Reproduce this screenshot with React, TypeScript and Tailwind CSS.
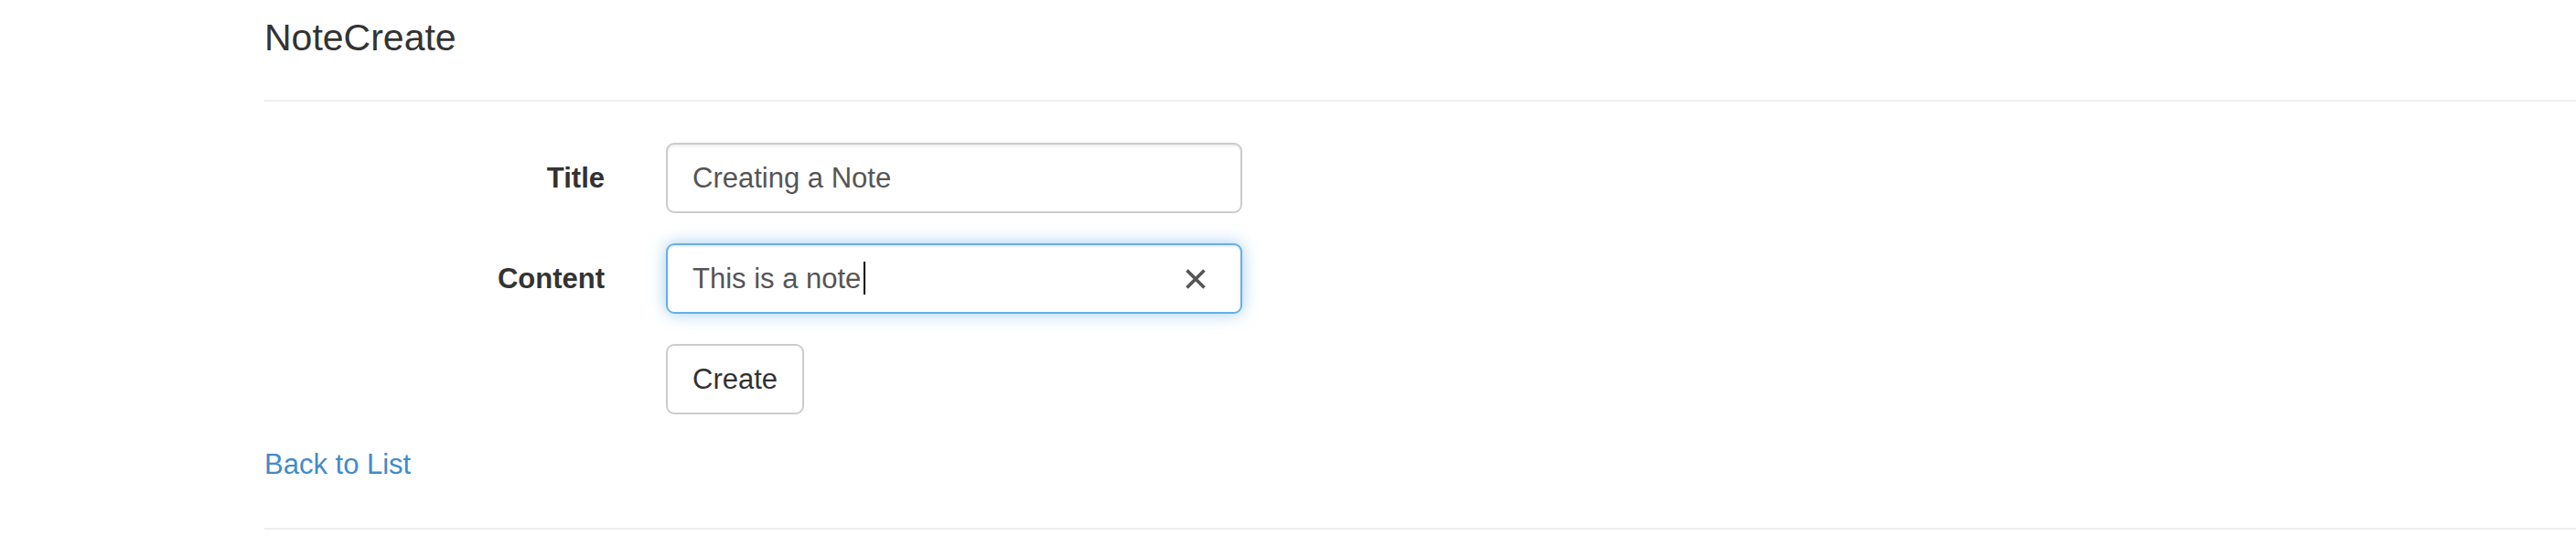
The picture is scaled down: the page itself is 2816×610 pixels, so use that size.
import { useState } from "react";

const fieldClass =
  "block h-[77px] w-full rounded-[9px] border-2 bg-white pl-[27px] text-[31px] leading-[44px] text-[#555555] outline-none";

export default function App() {
  const [title, setTitle] = useState("Creating a Note");
  const [content, setContent] = useState("This is a note");

  return (
    <main className="bg-white pt-[19px] pb-8 pl-[289px] font-['Liberation_Sans',Arial,sans-serif] text-[31px] leading-[44px] text-[#333333]">
      <h4 className="text-[41px] leading-[44px] font-normal">NoteCreate</h4>
      <hr className="mt-[46px] border-t-2 border-[#eeeeee]" />

      <form className="mt-[45px] flex flex-col gap-[33px]" onSubmit={(e) => e.preventDefault()}>
        <div className="flex items-center gap-[67px]">
          <label htmlFor="title" className="w-[372px] text-right font-bold">
            Title
          </label>
          <div className="w-[630px]">
            <input
              id="title"
              type="text"
              value={title}
              onChange={(e) => setTitle(e.target.value)}
              className={`${fieldClass} border-[#cccccc] pr-[27px] shadow-[inset_0_2px_2px_rgba(0,0,0,0.075)]`}
            />
          </div>
        </div>

        <div className="flex items-center gap-[67px]">
          <label htmlFor="content" className="w-[372px] text-right font-bold">
            Content
          </label>
          <div className="relative w-[630px]">
            <input
              id="content"
              type="text"
              value={content}
              onChange={(e) => setContent(e.target.value)}
              className={`${fieldClass} border-[#66afe9] pr-20 caret-transparent shadow-[inset_0_2px_2px_rgba(0,0,0,0.075),0_0_18px_rgba(102,175,233,0.6)]`}
            />
            <span aria-hidden="true" className="absolute top-5 left-[216px] h-9 w-[2px] bg-black" />
            <button
              type="button"
              aria-label="Clear content"
              onClick={() => setContent("")}
              className="absolute inset-y-0 right-[29px] flex w-11 items-center justify-center text-[#555555]"
            >
              <svg width="22" height="22" viewBox="0 0 22 22" fill="none" stroke="currentColor" strokeWidth="3.6">
                <path d="M1.5 1.5 20.5 20.5M20.5 1.5 1.5 20.5" />
              </svg>
            </button>
          </div>
        </div>

        <div className="flex pl-[439px]">
          <button
            type="submit"
            className="h-[77px] rounded-[9px] border-2 border-[#cccccc] bg-white px-[27px] text-[31px] leading-[44px]"
          >
            Create
          </button>
        </div>
      </form>

      <div className="mt-[33px]">
        <a href="#list" className="text-[#428bca]">
          Back to List
        </a>
      </div>
      <hr className="mt-[47px] border-t-2 border-[#eeeeee]" />
    </main>
  );
}
